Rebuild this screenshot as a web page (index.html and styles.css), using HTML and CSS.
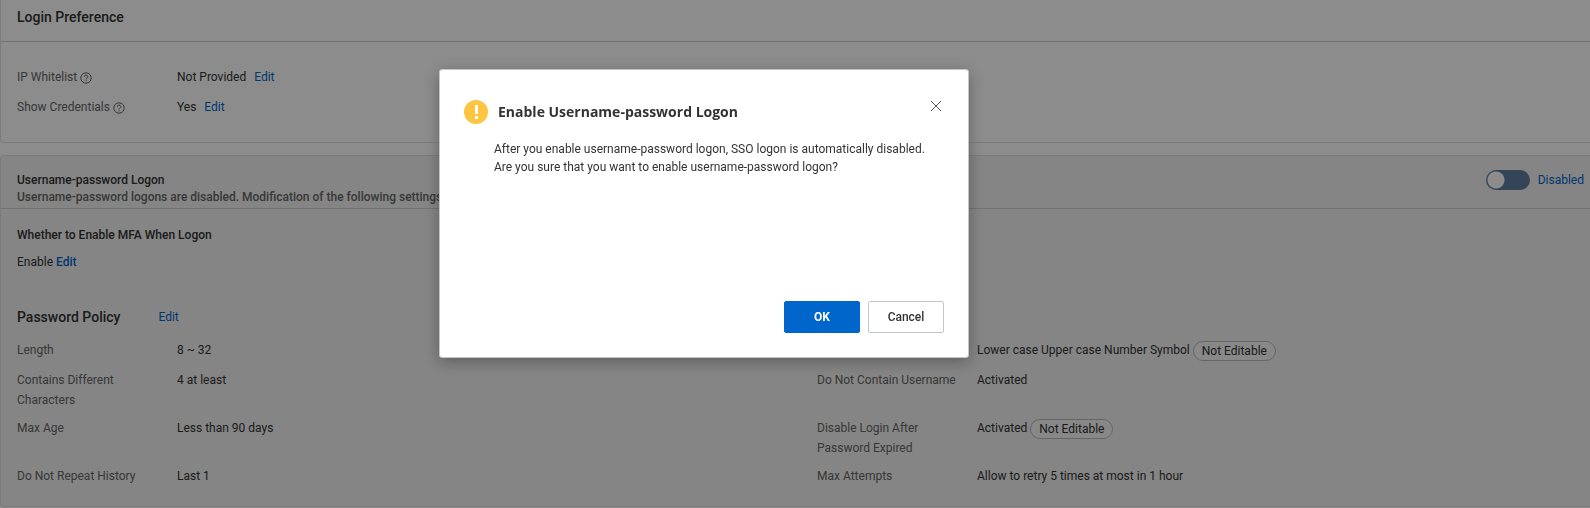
FILE: index.html
```html
<!DOCTYPE html>
<html lang="en">
<head>
    <meta charset="UTF-8">
    <meta name="viewport" content="width=device-width, initial-scale=1.0">
    <title>Login Preference</title>
    <link rel="stylesheet" href="styles.css">
</head>
<body>
    <div class="page">
        <section class="card">
            <h2 class="card-header">Login Preference</h2>
            <dl class="login-info">
                <div class="row">
                    <dt>IP Whitelist
                        <svg class="help" viewBox="0 0 12 12"><circle cx="6" cy="6" r="5.2"/><path d="M4.3 4.8a1.7 1.7 0 1 1 2.5 1.5c-.6.3-.8.5-.8 1.1M6 8.3v1"/></svg>
                    </dt>
                    <dd>Not Provided <a href="#" class="edit">Edit</a></dd>
                </div>
                <div class="row">
                    <dt>Show Credentials
                        <svg class="help" viewBox="0 0 12 12"><circle cx="6" cy="6" r="5.2"/><path d="M4.3 4.8a1.7 1.7 0 1 1 2.5 1.5c-.6.3-.8.5-.8 1.1M6 8.3v1"/></svg>
                    </dt>
                    <dd>Yes <a href="#" class="edit">Edit</a></dd>
                </div>
            </dl>
        </section>

        <section class="card card-disabled">
            <div class="logon-header">
                <div class="logon-title">
                    <h3>Username-password Logon</h3>
                    <p>Username-password logons are disabled. Modification of the following settings does not take effect.</p>
                </div>
                <label class="switch">
                    <input type="checkbox">
                    <span>Disabled</span>
                </label>
            </div>
            <div class="mfa">
                <h3>Whether to Enable MFA When Logon</h3>
                <p>Enable <a href="#">Edit</a></p>
            </div>
            <div class="policy-header">
                <h2>Password Policy</h2>
                <a href="#">Edit</a>
            </div>
            <dl class="policy">
                <div class="row">
                    <dt>Length</dt>
                    <dd>8 ~ 32</dd>
                </div>
                <div class="row">
                    <dt>Required Elements</dt>
                    <dd>Lower case Upper case Number Symbol <span class="tag">Not Editable</span></dd>
                </div>
                <div class="row">
                    <dt>Contains Different Characters</dt>
                    <dd>4 at least</dd>
                </div>
                <div class="row">
                    <dt>Do Not Contain Username</dt>
                    <dd>Activated</dd>
                </div>
                <div class="row">
                    <dt>Max Age</dt>
                    <dd>Less than 90 days</dd>
                </div>
                <div class="row">
                    <dt>Disable Login After Password Expired</dt>
                    <dd>Activated <span class="tag">Not Editable</span></dd>
                </div>
                <div class="row">
                    <dt>Do Not Repeat History</dt>
                    <dd>Last 1</dd>
                </div>
                <div class="row">
                    <dt>Max Attempts</dt>
                    <dd>Allow to retry 5 times at most in 1 hour</dd>
                </div>
            </dl>
        </section>
    </div>

    <div class="overlay">
        <div class="dialog" role="dialog" aria-labelledby="dialog-title">
            <div class="dialog-header">
                <svg class="warning" viewBox="0 0 24 24"><circle cx="12" cy="12" r="12" fill="#ffc440"/><path d="M11 5h3v9h-3zM11 16h3v3h-3z" fill="#fff"/></svg>
                <h2 id="dialog-title">Enable Username-password Logon</h2>
                <button class="close" aria-label="Close">
                    <svg viewBox="0 0 12 12"><path d="M1 1l10 10M11 1L1 11"/></svg>
                </button>
            </div>
            <p class="dialog-body">After you enable username-password logon, SSO logon is automatically disabled.<br>Are you sure that you want to enable username-password logon?</p>
            <div class="dialog-footer">
                <button class="btn btn-primary">OK</button>
                <button class="btn">Cancel</button>
            </div>
        </div>
    </div>
</body>
</html>
```
FILE: styles.css
```css
* {
    box-sizing: border-box;
}
body {
    margin: 0;
    font-family: Roboto, "Open Sans", sans-serif;
    font-size: 12px;
    line-height: 20px;
    color: #333;
    background: #fff;
}
h2, h3, p, dl, dd {
    margin: 0;
}
h2 {
    font-size: 14px;
    font-weight: 500;
}
h3 {
    font-size: 12px;
    font-weight: 500;
}
a {
    color: #06c;
    text-decoration: none;
}
.page {
    height: 100vh;
    overflow: hidden;
}
.card {
    border: 1px solid #e0e0e0;
    border-right: none;
    border-radius: 4px 0 0 4px;
    margin-bottom: 12px;
}
.card:first-child {
    border-top: none;
    border-top-left-radius: 0;
}
.card-disabled {
    background: #f2f2f2;
    margin-bottom: 0;
}
.card-header {
    padding: 7px 16px 14px;
    border-bottom: 1px solid #d0d0d0;
}
.row {
    display: flex;
    min-height: 22px;
    margin-bottom: 8px;
}
.row dt {
    width: 144px;
    margin-right: 16px;
    color: #666;
}
.login-info {
    padding: 25px 16px 15px;
}
.help {
    width: 12px;
    height: 12px;
    vertical-align: -3px;
    fill: none;
    stroke: #666;
}
.edit {
    margin-left: 5px;
}
.logon-header {
    display: flex;
    justify-content: space-between;
    padding: 14px 6px 4px 16px;
    border-bottom: 1px solid #d0d0d0;
}
.logon-title p {
    height: 14px;
    line-height: 14px;
    font-weight: 500;
    color: #666;
}
.switch {
    display: flex;
    gap: 8px;
    height: 20px;
    color: #06c;
}
.switch input {
    appearance: none;
    width: 44px;
    height: 20px;
    margin: 0;
    border-radius: 10px;
    background: radial-gradient(circle at 10px 10px, #fff 8px, #5f7f9f 9px);
}
.mfa {
    padding: 16px 16px 0;
}
.mfa p {
    margin-top: 7px;
}
.mfa a {
    font-weight: 500;
}
.policy-header {
    display: flex;
    gap: 38px;
    padding: 35px 16px 13px;
}
.policy {
    display: grid;
    grid-template-columns: 1fr 1fr;
    column-gap: 32px;
    padding: 0 5px 10px 16px;
}
.tag {
    display: inline-block;
    height: 20px;
    padding: 0 8px;
    line-height: 18px;
    vertical-align: -1px;
    border: 1px solid #bbb;
    border-radius: 10px;
    background: #f7f7f7;
}
.overlay {
    position: fixed;
    inset: 0;
    display: flex;
    justify-content: center;
    align-items: flex-start;
    padding: 69px 182px 0 0;
    background: rgba(0, 0, 0, 0.45);
}
.dialog {
    display: flex;
    flex-direction: column;
    width: 530px;
    min-height: 289px;
    padding: 24px;
    border: 1px solid #c0c6cc;
    border-radius: 3px;
    background: #fff;
    box-shadow: 0 4px 16px rgba(0, 0, 0, 0.3);
}
.dialog-header {
    display: flex;
    align-items: flex-end;
    gap: 10px;
    height: 30px;
}
.dialog-header h2 {
    font-family: "Open Sans", sans-serif;
    font-weight: 700;
    line-height: 24px;
}
.warning {
    width: 24px;
    height: 24px;
}
.close {
    align-self: flex-start;
    width: 14px;
    height: 24px;
    margin-left: auto;
    padding: 0;
    border: none;
    background: none;
}
.close svg {
    display: block;
    width: 12px;
    height: 12px;
    fill: none;
    stroke: #555;
}
.dialog-body {
    padding: 16px 0 0 30px;
    line-height: 18px;
}
.dialog-footer {
    display: flex;
    justify-content: flex-end;
    gap: 8px;
    margin-top: auto;
}
.btn {
    width: 76px;
    height: 32px;
    padding: 0;
    border: 1px solid #c0c6cc;
    border-radius: 2px;
    background: #fff;
    color: #333;
    font: 500 12px Roboto, sans-serif;
}
.btn-primary {
    border-color: #06c;
    background: #06c;
    color: #fff;
    font-weight: 700;
}
```
